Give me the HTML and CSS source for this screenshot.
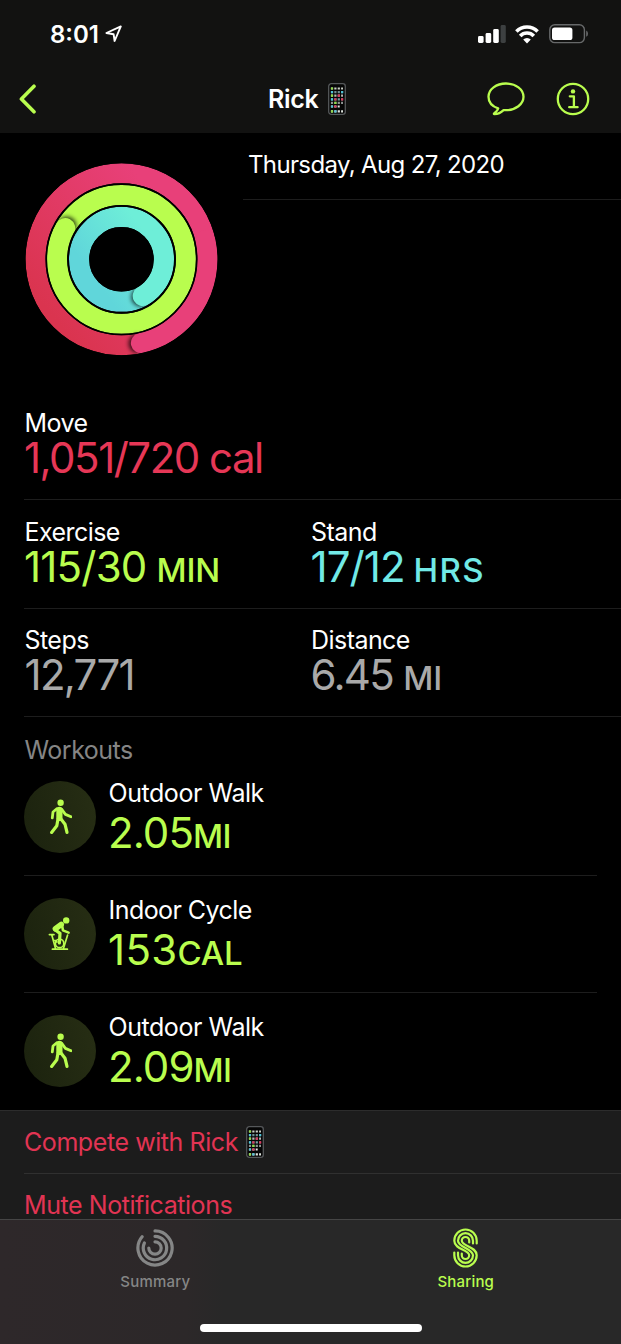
FILE: index.html
```html
<!DOCTYPE html>
<html lang="en">
  <head>
  <meta charset="utf-8">
  <title>Sharing</title>
  <link rel="stylesheet" href="styles.css">
  </head>

  <body>
  <svg width="0" height="0" class="defs">
    <defs>
      <symbol id="phone" viewBox="0 0 18 32">
        <rect x="0.7" y="0.7" width="16.6" height="30.6" rx="2.6" fill="#050505" stroke="#55585a" stroke-width="1.3"/>
        <g stroke-width="2.2" stroke-dasharray="2.2 1.2" fill="none">
          <path d="M2.9 5.5H15" stroke="#c9cfc5"/>
          <path d="M2.9 9.1H15" stroke="#6f8f92"/>
          <path d="M2.9 12.7H15" stroke="#b8bab8"/>
          <path d="M2.9 16.3H15" stroke="#7aa0a6"/>
          <path d="M2.9 19.9H15" stroke="#8f9492"/>
          <path d="M2.9 23.5H11.7" stroke="#e8e8e8"/>
          <path d="M2.9 28.4H15" stroke="#e0e6e0"/>
        </g>
        <g fill="#8fdc45"><path d="M2.9 4.4h2.2v2.2h-2.2zM2.9 11.6h2.2v2.2h-2.2zM6.3 18.8h2.2v2.2h-2.2zM2.9 27.3h2.2v2.2h-2.2z"/></g>
        <g fill="#e0355a"><path d="M9.7 11.6h2.2v2.2h-2.2zM6.3 15.2h2.2v2.2h-2.2zM13.1 15.2h2.2v2.2h-2.2zM6.3 22.4h2.2v2.2h-2.2z"/></g>
        <g fill="#4fc3d8"><path d="M2.9 8h2.2v2.2h-2.2zM13.1 8h2.2v2.2h-2.2zM2.9 15.2h2.2v2.2h-2.2zM2.9 22.4h2.2v2.2h-2.2zM6.3 27.3h2.2v2.2h-2.2z"/></g>
      </symbol>
      <symbol id="walk" viewBox="0 0 24 36">
        <circle cx="12.6" cy="3.8" r="3.2" fill="#b9fd4e"/>
        <g fill="none" stroke="#b9fd4e" stroke-linecap="round" stroke-linejoin="round">
          <path d="M11.4 10.8V19" stroke-width="6.2"/>
          <path d="M8.8 9.8L5 13L4.3 18.8M13.6 10.2L17.4 15.4L23 17.8" stroke-width="2.8"/>
          <path d="M10 20L8.8 26.8L3.6 33.4M12.6 19.6L17 25.2L19 33.4" stroke-width="3.2"/>
        </g>
      </symbol>
    </defs>
  </svg>

  <header>
    <div class="status">
      <span class="time">8:01</span>
      <svg class="arrow" width="18" height="18" viewBox="0 0 18 18"><path d="M1.4 8L15.8 1.4L9.6 16L8.6 9.2Z" fill="none" stroke="#fff" stroke-width="1.9" stroke-linejoin="round"/></svg>
      <svg class="signal" width="28" height="18" viewBox="0 0 28 18">
        <g fill="#fff"><rect y="11" width="5.6" height="7" rx="1.4"/><rect x="7.6" y="8" width="5.6" height="10" rx="1.4"/><rect x="15.2" y="4" width="5.6" height="14" rx="1.4"/></g>
        <rect x="22.6" width="5.2" height="18" rx="1.4" fill="#3d4041"/>
      </svg>
      <svg class="wifi" width="24" height="19" viewBox="0 0 24 19">
        <g fill="none" stroke="#fff" stroke-width="3.6">
          <path d="M1.4 6.4A15 15 0 0 1 22.6 6.4"/>
          <path d="M5.2 10.9A9.4 9.4 0 0 1 18.8 10.9"/>
        </g>
        <path d="M8.2 14.6A5.4 5.4 0 0 1 15.8 14.6L12 18.4Z" fill="#fff"/>
      </svg>
      <svg class="battery" width="40" height="20" viewBox="0 0 40 20">
        <rect x="0.8" y="0.8" width="34.6" height="17.8" rx="5" fill="none" stroke="#67696a" stroke-width="1.4"/>
        <rect x="3" y="3.4" width="20.4" height="12.6" rx="2.6" fill="#fff"/>
        <path d="M37.2 6.6Q39 7.4 39 9.7T37.2 12.8Z" fill="#67696a"/>
      </svg>
    </div>
    <nav>
      <svg class="back" width="18" height="30" viewBox="0 0 18 30"><path d="M15 2.2L2.4 15L15 27.8" fill="none" stroke="#b9fd4e" stroke-width="3.6" stroke-linecap="round" stroke-linejoin="round"/></svg>
      <h1>Rick <svg width="18" height="32"><use href="#phone"/></svg></h1>
      <svg class="bubble" width="38" height="34" viewBox="0 0 38 34"><path d="M11.2 26.4C5 24.4 1.5 20 1.5 14.8C1.5 7.4 9.2 1.5 19 1.5S36.5 7.4 36.5 14.8S28.8 28.2 19 28.2C18 28.2 17.4 28.2 16.6 28.1C14 30.6 11 32 7.4 32.2C6.8 32.2 6.8 31.8 7.1 31.5C9.3 29.7 10.8 28.2 11.2 26.4Z" fill="none" stroke="#b9fd4e" stroke-width="2.3" stroke-linejoin="round"/></svg>
      <svg class="info" width="34" height="34" viewBox="0 0 34 34">
        <circle cx="17" cy="17" r="15.2" fill="none" stroke="#b9fd4e" stroke-width="2.3"/>
        <circle cx="17" cy="9.4" r="2.2" fill="#b9fd4e"/>
        <path d="M13.8 14.3H17.9V25M13.2 25.2H21.6" fill="none" stroke="#b9fd4e" stroke-width="2.3" stroke-linecap="round" stroke-linejoin="round"/>
      </svg>
    </nav>
  </header>

  <main>
    <section class="day">
      <svg class="rings" width="194" height="194" viewBox="-97.5 -97.3 194 194">
        <defs>
          <linearGradient id="move" gradientUnits="userSpaceOnUse" x1="-50" y1="80" x2="70" y2="-20"><stop offset="0" stop-color="#da344f"/><stop offset="1" stop-color="#e84079"/></linearGradient>
          <linearGradient id="stand" gradientUnits="userSpaceOnUse" x1="-30" y1="15" x2="25" y2="-25"><stop offset="0" stop-color="#60d6da"/><stop offset="1" stop-color="#6eeed8"/></linearGradient>
          <filter id="soft" x="-50%" y="-50%" width="200%" height="200%"><feGaussianBlur stdDeviation="2"/></filter>
          <mask id="bands" maskUnits="userSpaceOnUse" x="-98" y="-98" width="196" height="196">
            <g fill="none" stroke="#fff"><circle r="86" stroke-width="20"/><circle r="64.4" stroke-width="20"/><circle r="42.4" stroke-width="20.2"/></g>
          </mask>
        </defs>
        <g mask="url(#bands)" fill="none" stroke-width="20" stroke-linecap="round">
          <circle r="86" stroke="url(#move)"/>
          <circle r="64.4" stroke="#b9fd4e"/>
          <circle r="42.4" stroke="url(#stand)" stroke-width="20.2"/>
          <g fill="#000" fill-opacity=".75" filter="url(#soft)">
            <circle cx="16.5" cy="84.2" r="9.5"/>
            <circle cx="-54.6" cy="-33.4" r="9.5"/>
            <circle cx="19.2" cy="37.6" r="9.5"/>
          </g>
          <path d="M83.8 -19.35A86 86 0 0 1 19.35 83.8" stroke="#e84079"/>
          <path d="M-31.2 56.3A64.4 64.4 0 0 1 -56.3 -31.2" stroke="#b9fd4e"/>
          <path d="M36.7 -21.2A42.4 42.4 0 0 1 21.2 36.7" stroke="#6eeed8"/>
        </g>
      </svg>
      <div class="date">Thursday, Aug 27, 2020</div>
    </section>

    <section class="stats">
      <div class="row">
        <div class="stat move"><span class="label">Move</span><span class="value">1,051/720 cal</span></div>
      </div>
      <div class="row">
        <div class="stat exercise"><span class="label">Exercise</span><span class="value">115/30 <small>MIN</small></span></div>
        <div class="stat stand"><span class="label">Stand</span><span class="value">17/12 <small>HRS</small></span></div>
      </div>
      <div class="row">
        <div class="stat steps"><span class="label">Steps</span><span class="value">12,771</span></div>
        <div class="stat distance"><span class="label">Distance</span><span class="value">6.45 <small>MI</small></span></div>
      </div>
    </section>

    <section class="workouts">
      <h2>Workouts</h2>
      <div class="workout">
        <div class="badge"><svg width="24" height="36"><use href="#walk"/></svg></div>
        <div class="stat walk"><span class="label">Outdoor Walk</span><span class="value">2.05<small>MI</small></span></div>
      </div>
      <div class="workout">
        <div class="badge">
          <svg width="24" height="36" viewBox="0 0 24 36">
            <circle cx="18.2" cy="4.4" r="3.2" fill="#b9fd4e"/>
            <g fill="none" stroke="#b9fd4e" stroke-linecap="round" stroke-linejoin="round">
              <path d="M13.2 8.4L7.4 12.8" stroke-width="5.6"/>
              <path d="M14 9L15 14.4L20.6 16.6" stroke-width="2.6"/>
              <path d="M7 13.8L12 17.4L11.4 27" stroke-width="3.2"/>
              <path d="M1.4 18.6H6M3.8 19L7.4 32M7 24.4L9 26M19.6 19L15.6 32M4.4 33.2H19.4" stroke-width="1.7"/>
              <circle cx="11.6" cy="27.4" r="4.2" stroke-width="1.6"/>
            </g>
          </svg>
        </div>
        <div class="stat cycle"><span class="label">Indoor Cycle</span><span class="value">153<small>CAL</small></span></div>
      </div>
      <div class="workout">
        <div class="badge"><svg width="24" height="36"><use href="#walk"/></svg></div>
        <div class="stat walk"><span class="label">Outdoor Walk</span><span class="value">2.09<small>MI</small></span></div>
      </div>
    </section>

    <section class="actions">
      <div class="action">Compete with Rick <svg width="18" height="32"><use href="#phone"/></svg></div>
      <div class="action">Mute Notifications</div>
    </section>
  </main>

  <footer>
    <div class="tabs">
      <div class="tab">
        <svg width="40" height="40" viewBox="-20 -20 40 40">
          <g fill="none" stroke="#858686" stroke-width="3.2" stroke-linecap="round">
            <path d="M0 -17.1A17.1 17.1 0 1 1 -12.9 -11.2"/>
            <path d="M0 -11.7A11.7 11.7 0 1 1 -10.6 -5"/>
            <path d="M0 -6.2A6.2 6.2 0 1 1 -6.2 0"/>
          </g>
        </svg>
        <span>Summary</span>
      </div>
      <div class="tab active">
        <svg width="40" height="40" viewBox="-19.5 -20 40 40">
          <g fill="none" stroke="#b9fd4e" stroke-width="2.2" stroke-linecap="round">
            <path d="M11.2 -4.5V-7.3A11.2 11.2 0 0 0 -11.2 -7.3C-11.2 1.6 3.7 1.6 3.7 7.3A3.7 3.7 0 0 1 -3.7 7.3V5.6"/>
            <path d="M7.5 -4.5V-7.3A7.5 7.5 0 0 0 -7.5 -7.3C-7.5 -0.8 7.5 0.8 7.5 7.3A7.5 7.5 0 0 1 -7.5 7.3V4.5"/>
            <path d="M3.7 -5.6V-7.3A3.7 3.7 0 0 0 -3.7 -7.3C-3.7 -1.6 11.2 -1.6 11.2 7.3A11.2 11.2 0 0 1 -11.2 7.3V4.5"/>
          </g>
        </svg>
        <span>Sharing</span>
      </div>
    </div>
    <div class="home"></div>
  </footer>
  </body>
</html>
```

FILE: styles.css
```css
* {
  box-sizing: border-box;
}

body {
  margin: 0;
  width: 621px;
  height: 1344px;
  overflow: hidden;
  display: flex;
  flex-direction: column;
  background: #000;
  color: #fff;
  font-family: Inter, "Liberation Sans", sans-serif;
  font-size: 25px;
}

svg {
  display: block;
  flex: none;
}

.defs {
  position: absolute;
}

header {
  flex: none;
  height: 133px;
  background: #121211;
}

.status {
  display: flex;
  align-items: center;
  height: 66px;
  padding: 2px 32px 0 50px;
}

.time {
  font-size: 24px;
  font-weight: 600;
}

.arrow {
  margin-left: 6px;
}

.signal {
  margin-left: auto;
}

.wifi {
  margin-left: 9px;
}

.battery {
  margin-left: 10px;
}

nav {
  display: flex;
  align-items: center;
  height: 66px;
  padding-left: 19px;
}

h1 {
  display: flex;
  align-items: center;
  gap: 9.5px;
  margin: 0 0 0 231px;
  font-size: 25px;
  font-weight: 600;
  letter-spacing: -0.3px;
}

.bubble {
  margin-left: 141px;
}

.info {
  margin-left: 31px;
}

main {
  flex: none;
  height: 1086px;
  overflow: hidden;
}

.day {
  display: flex;
  height: 258px;
  padding-left: 24px;
}

.rings {
  margin-top: 29px;
}

.date {
  flex: 1;
  height: 67px;
  margin-left: 25px;
  padding-left: 5px;
  border-bottom: 1px solid #1d1d1d;
  line-height: 64px;
  font-size: 24px;
  letter-spacing: -0.64px;
}

.row {
  display: flex;
  height: 109px;
  margin-left: 24px;
  padding-top: 18px;
  border-bottom: 1px solid #1d1d1d;
}

.row:last-child {
  height: 108px;
  padding-top: 17px;
}

.row .stat {
  width: 286.5px;
}

.label, .value {
  display: block;
  white-space: nowrap;
}

.label {
  height: 27px;
  line-height: 28px;
  letter-spacing: -0.55px;
  padding-left: 0.5px;
}

.value {
  height: 44px;
  line-height: 44px;
  font-size: 42px;
  font-weight: 400;
}

.value small {
  font-size: 33px;
  font-weight: 500;
  letter-spacing: -0.2px;
}

.move .value {
  color: #e63756;
  letter-spacing: -1.5px;
}

.exercise .value, .workout .value {
  color: #b9fd4e;
}

.exercise .value {
  letter-spacing: -0.8px;
  word-spacing: -1px;
}

.stand .value {
  color: #71e9e6;
  letter-spacing: -0.9px;
  word-spacing: -2px;
}

.stand small {
  letter-spacing: 1.3px;
}

.steps .value, .distance .value {
  color: #a9a9a9;
  letter-spacing: -1.7px;
}

.steps .value {
  padding-left: 0.5px;
}

.walk .value {
  letter-spacing: -0.9px;
}

.walk small {
  letter-spacing: -0.6px;
}

.cycle .value {
  letter-spacing: 0.3px;
}

h2 {
  margin: 0 0 0 24.5px;
  height: 48px;
  padding-top: 17px;
  line-height: 33px;
  font-size: 25px;
  font-weight: 400;
  letter-spacing: -0.5px;
  color: #858585;
}

.workout {
  display: flex;
  height: 117px;
  margin: 0 24px;
  padding-top: 22px;
  border-bottom: 1px solid #1d1d1d;
}

h2 + .workout {
  height: 111px;
  padding-top: 16px;
}

.workout:last-child {
  border-bottom: 0;
}

.badge {
  display: flex;
  align-items: center;
  justify-content: center;
  width: 72px;
  height: 72px;
  margin-right: 12px;
  border-radius: 50%;
  background: linear-gradient(75deg, #1b220e, #272e14);
}

.workout .stat {
  margin-top: -2px;
}

.workout .label {
  height: 32px;
  letter-spacing: -0.45px;
}

.cycle .label {
  letter-spacing: -0.55px;
}

.actions {
  height: 109px;
  background: #1c1c1c;
  border-top: 1px solid #2c2c2c;
}

.action {
  display: flex;
  align-items: center;
  gap: 8px;
  height: 63px;
  margin-left: 24px;
  border-bottom: 1px solid #303030;
  letter-spacing: -0.43px;
  color: #e23453;
}

footer {
  flex: none;
  height: 125px;
  border-top: 1px solid #454545;
  background: linear-gradient(90deg, #2e282a, #2c2829 30%, #282828 36%);
}

.tabs {
  display: flex;
  height: 104px;
}

.tab {
  flex: 1;
  display: flex;
  flex-direction: column;
  align-items: center;
  padding-top: 8px;
  font-size: 15px;
  font-weight: 500;
  color: #858686;
}

.tab span {
  margin-top: 4px;
  letter-spacing: 0.2px;
}

.active {
  color: #b9fd4e;
}

.home {
  width: 222px;
  height: 8px;
  margin: 0 auto;
  border-radius: 4px;
  background: #fff;
}
```
